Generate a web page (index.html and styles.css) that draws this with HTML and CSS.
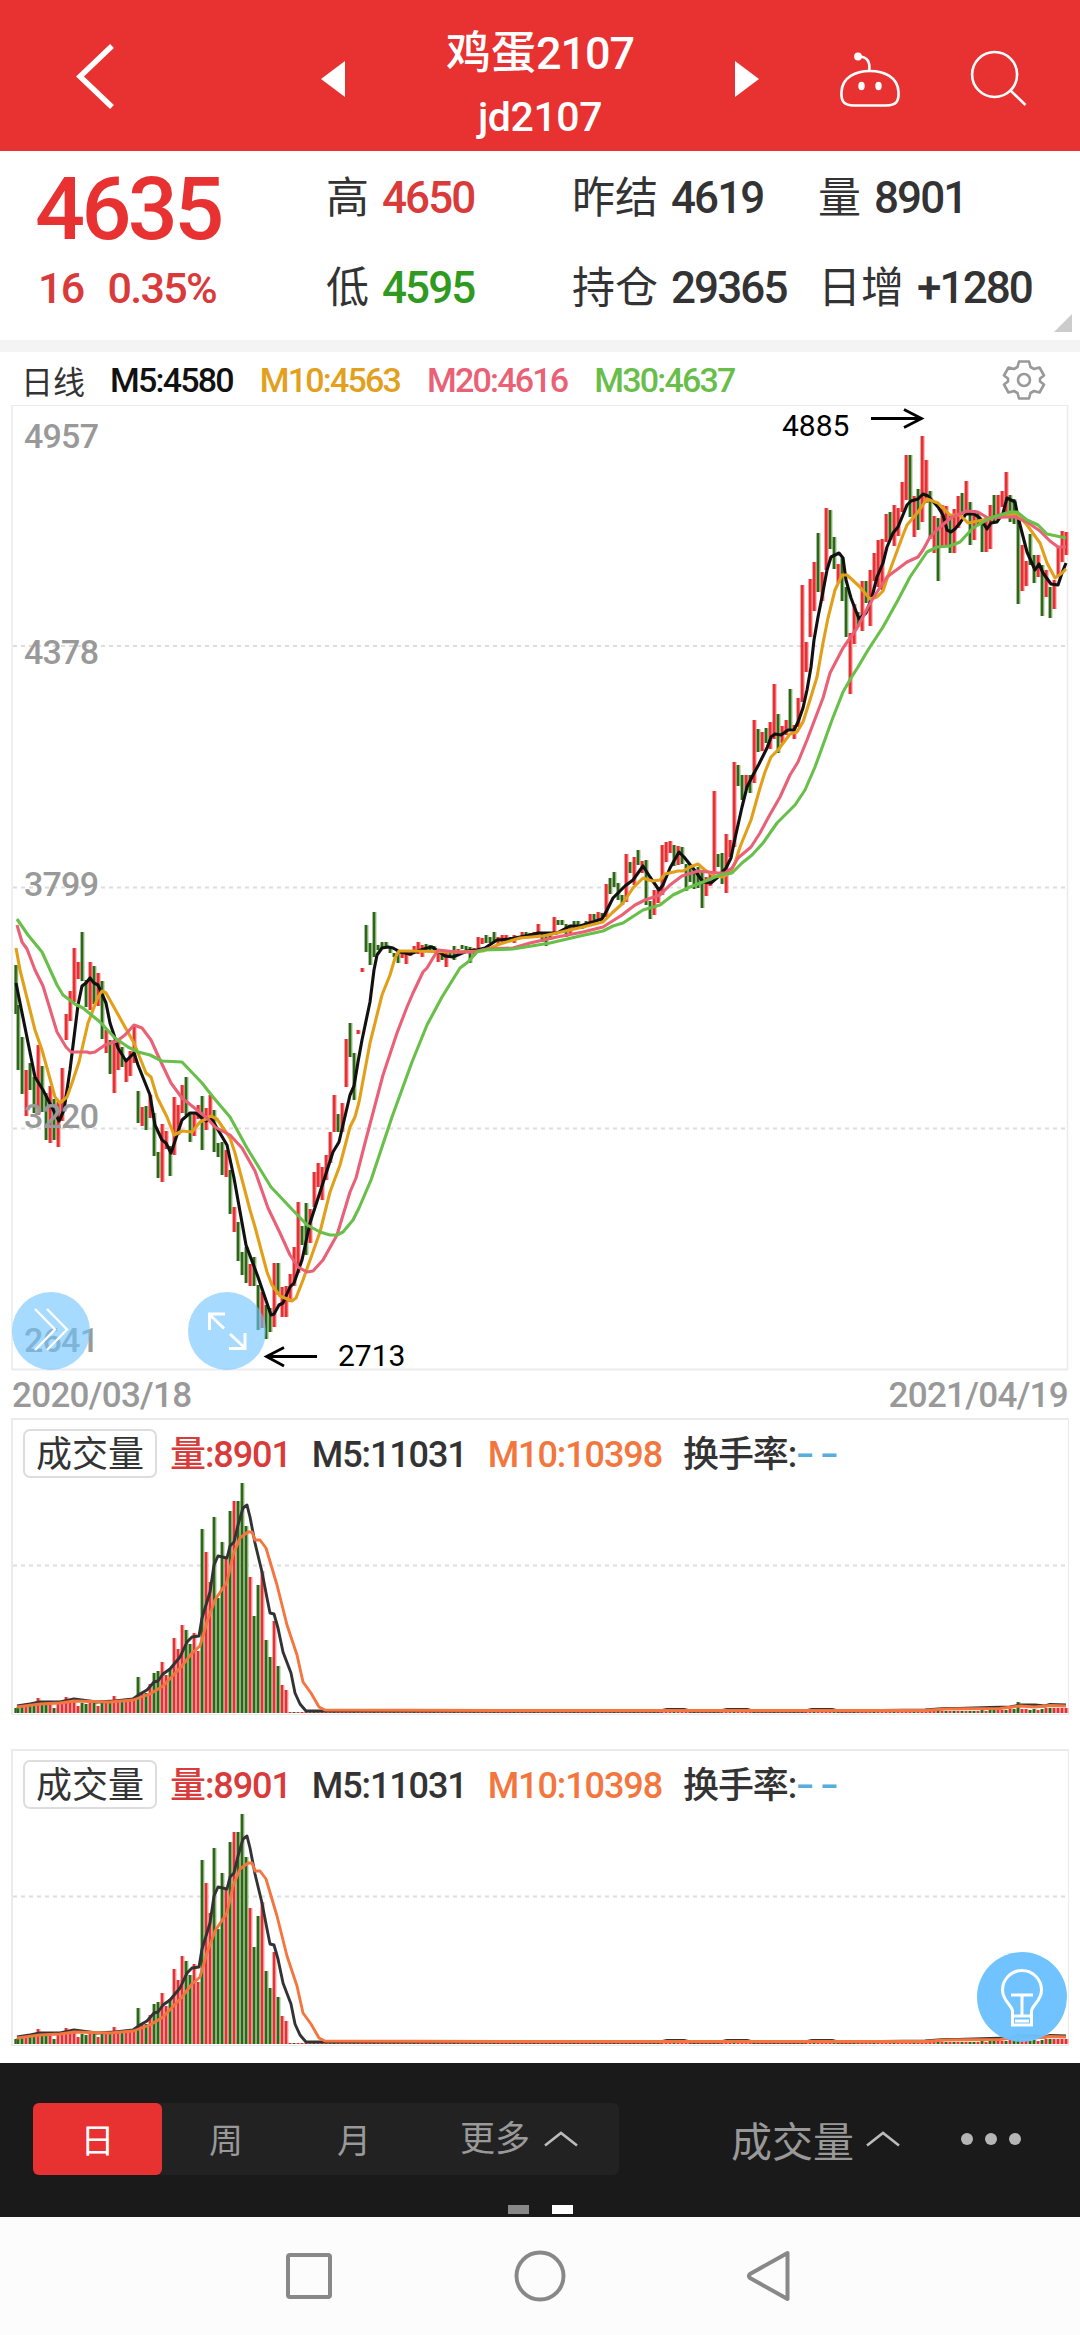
FILE: index.html
```html
<!DOCTYPE html>
<html lang="zh-CN">
<head>
    <meta charset="UTF-8">
    <meta name="viewport" content="width=device-width, initial-scale=1.0">
    <title>鸡蛋2107</title>
    <link rel="stylesheet" href="styles.css">
</head>
<body>
    <header class="header">
        <svg class="back" width="300" height="151" viewBox="0 0 300 151">
            <path d="M112 46 L80 76.500 L112 107" fill="none" stroke="#fff" stroke-width="5.500"/>
        </svg>
        <svg width="60" height="151" viewBox="300 0 60 151"><path d="M321 79 L345 61 V97 Z" fill="#fff"/></svg>
        <div class="title">
            <div class="name">鸡蛋<span class="num">2107</span></div>
            <div class="code">jd2107</div>
        </div>
        <svg width="60" height="151" viewBox="720 0 60 151"><path d="M759 79 L735 61 V97 Z" fill="#fff"/></svg>
        <svg width="150" height="151" viewBox="780 0 150 151" fill="none" stroke="#fff" stroke-width="2.600">
            <path d="M870 71 C884 71 898 77 898.500 92 C899 102 896 105 886 105.500 H854 C844 105 841 102 841.500 92 C842 77 856 71 870 71 Z"/>
            <path d="M858 56.500 C866 56 871 61 869 71"/>
            <circle cx="858" cy="56.500" r="2.600" fill="#fff"/>
            <ellipse cx="861.500" cy="86" rx="3.200" ry="4.200" fill="#fff" stroke="none"/>
            <ellipse cx="878.500" cy="86" rx="3.200" ry="4.200" fill="#fff" stroke="none"/>
        </svg>
        <svg width="150" height="151" viewBox="930 0 150 151" fill="none" stroke="#fff" stroke-width="2.600">
            <circle cx="994.600" cy="74.500" r="22.500"/>
            <path d="M1010 90 L1025.500 105"/>
        </svg>
    </header>

    <section class="quote">
        <div class="price">4635</div>
        <div class="item">高<span class="num red">4650</span></div>
        <div class="item">昨结<span class="num">4619</span></div>
        <div class="item">量<span class="num">8901</span></div>
        <div class="change"><span>16</span><span>0.35%</span></div>
        <div class="item">低<span class="num green">4595</span></div>
        <div class="item">持仓<span class="num">29365</span></div>
        <div class="item">日增<span class="num">+1280</span></div>
        <svg class="corner" width="18" height="18" viewBox="0 0 18 18"><path d="M18 0 V18 H0 Z" fill="#ccc"/></svg>
    </section>

    <div class="ma-bar">
        <span class="period">日线</span>
        <span class="m5">M5:4580</span>
        <span class="m10">M10:4563</span>
        <span class="m20">M20:4616</span>
        <span class="m30">M30:4637</span>
        <svg class="gear" width="44" height="44" viewBox="-22 -22 44 44" fill="none" stroke="#999" stroke-width="2.600" stroke-linejoin="round">
            <path d="M-5 -18.500 H5 L6.500 -13 L10 -11 L15.500 -12.500 L20 -4.500 L16 -1.500 V1.500 L20 4.500 L15.500 12.500 L10 11 L6.500 13 L5 18.500 H-5 L-6.500 13 L-10 11 L-15.500 12.500 L-20 4.500 L-16 1.500 V-1.500 L-20 -4.500 L-15.500 -12.500 L-10 -11 L-6.500 -13 Z"/>
            <circle r="6"/>
        </svg>
    </div>

    <section class="kline">
        <svg id="kline" width="1080" height="966" viewBox="0 405 1080 966"></svg>
        <svg class="float-btn play" width="78" height="78" viewBox="12 1292 78 78" fill="none" stroke="#fff">
            <circle cx="51" cy="1331" r="39" fill="#6fc4ff" fill-opacity="0.62" stroke="none"/>
            <path d="M35 1309 L55 1329.500 L35 1350 M47 1309 L67 1329.500 L47 1350" stroke-width="2.400"/>
        </svg>
        <svg class="float-btn expand" width="78" height="78" viewBox="188 1292 78 78" fill="none" stroke="#fff">
            <circle cx="227" cy="1331" r="39" fill="#6fc4ff" fill-opacity="0.62" stroke="none"/>
            <path d="M209.500 1330 V1314 H225 M210 1315 L224 1328.500 M229 1348.500 H245 V1333 M230 1334 L245 1348" stroke-width="3"/>
        </svg>
    </section>
    <div class="dates"><span>2020/03/18</span><span>2021/04/19</span></div>

    <section class="volume">
        <div class="vol-bar">
            <span class="vol-btn">成交量</span>
            <span class="v-now">量:8901</span>
            <span class="v-m5">M5:11031</span>
            <span class="v-m10">M10:10398</span>
            <span class="v-rate">换手率:<i>--</i></span>
        </div>
        <svg class="vol-chart" width="1062" height="234" viewBox="12 1480 1062 234"></svg>
    </section>

    <section class="volume second">
        <div class="vol-bar">
            <span class="vol-btn">成交量</span>
            <span class="v-now">量:8901</span>
            <span class="v-m5">M5:11031</span>
            <span class="v-m10">M10:10398</span>
            <span class="v-rate">换手率:<i>--</i></span>
        </div>
        <svg class="vol-chart" width="1062" height="234" viewBox="12 1480 1062 234"></svg>
        <svg class="bulb" width="90" height="90" viewBox="-45 -45 90 90" fill="none" stroke="#fff" stroke-width="3">
            <circle r="45" fill="#6bc1ff" fill-opacity="0.960" stroke="none"/>
            <path d="M-9.500 28 V14 C-10 8 -19.500 4 -19.500 -7 A19.500 19.500 0 0 1 19.500 -7 C19.500 4 10 8 9.500 14 V28 Z"/>
            <path d="M-11 -2 H11 M0 -2 V18 M-9 19 H9 M-7 24 H7"/>
        </svg>
    </section>

    <nav class="toolbar">
        <div class="toolbar-row">
            <div class="tabs">
                <span class="tab active">日</span>
                <span class="tab">周</span>
                <span class="tab">月</span>
                <span class="tab more">更多
                    <svg width="34" height="16" viewBox="0 0 34 16"><path d="M1 14.500 L17 2 L33 14.500" fill="none" stroke="#bbb" stroke-width="2.600"/></svg>
                </span>
            </div>
            <span class="indicator">成交量
                <svg width="34" height="16" viewBox="0 0 34 16"><path d="M1 14.500 L17 2 L33 14.500" fill="none" stroke="#bbb" stroke-width="2.600"/></svg>
            </span>
            <div class="dots"><b></b><b></b><b></b></div>
        </div>
        <div class="pages"><b></b><b class="on"></b></div>
    </nav>

    <footer class="sysnav">
        <svg width="1080" height="118" viewBox="0 2217 1080 118" fill="none" stroke="#888" stroke-width="4" stroke-linejoin="round">
            <rect x="288" y="2255" width="42" height="42" rx="2"/>
            <circle cx="540" cy="2276" r="23.500"/>
            <path d="M750 2274 Q748 2276 750 2278 L787.500 2299 V2253 Z"/>
        </svg>
    </footer>

    <script src="chart.js"></script>
</body>
</html>
```

FILE: styles.css
```css
* {
    box-sizing: border-box;
}

body {
    margin: 0;
    width: 1080px;
    background: #fff;
    color: #333;
    font-family: Roboto, "Noto Sans CJK SC", sans-serif;
}

svg {
    display: block;
    flex: none;
}

.header {
    display: flex;
    height: 151px;
    background: #e83131;
    color: #fff;
}

.title {
    width: 360px;
    padding-top: 24px;
    text-align: center;
}

.name {
    height: 62px;
    line-height: 60px;
    font-size: 45px;
    font-weight: 500;
}

.code {
    height: 60px;
    line-height: 62px;
    font-size: 41px;
    font-weight: 500;
    letter-spacing: -0.4px;
}

.name .num {
    letter-spacing: -1.1px;
}

.quote {
    position: relative;
    display: grid;
    grid-template-columns: 291px 246px 246px 1fr;
    grid-template-rows: 90px 89px;
    align-items: center;
    height: 189px;
    padding: 2px 0 0 35px;
}

.price {
    padding-top: 22px;
    font-size: 88px;
    line-height: 90px;
    font-weight: 500;
    letter-spacing: -3.6px;
    color: #e83131;
}

.change {
    display: flex;
    gap: 24px;
    padding-left: 3px;
    font-size: 43px;
    letter-spacing: -1.7px;
    font-weight: 500;
    color: #d93a3a;
}

.item {
    font-size: 43px;
    line-height: 60px;
    white-space: nowrap;
}

.item .num {
    margin-left: 13px;
    font-size: 44px;
    font-weight: 500;
    letter-spacing: -1.9px;
}

.red {
    color: #d93a3a;
}

.green {
    color: #2f9a1f;
}

.corner {
    position: absolute;
    right: 8px;
    bottom: 8px;
}

.ma-bar {
    display: flex;
    align-items: center;
    height: 65px;
    padding: 3px 34px 0 21px;
    border-top: 12px solid #f4f4f4;
    font-size: 34px;
    font-weight: 500;
    letter-spacing: -1.8px;
    white-space: nowrap;
}

.ma-bar span {
    margin-right: 27px;
}

.ma-bar .period {
    margin-right: 25px;
    font-size: 32px;
    font-weight: 400;
    letter-spacing: 0;
}

.m5 { color: #111; }
.m10 { color: #e2a01c; }
.m20 { color: #ea6075; }
.m30 { color: #69be4a; }

.gear {
    margin-left: auto;
}

.kline {
    position: relative;
    height: 966px;
}

.float-btn {
    position: absolute;
    bottom: 1px;
}

.play { left: 12px; }
.expand { left: 188px; }

.axis {
    font-size: 34px;
    font-weight: 500;
    fill: #999;
}

.mark {
    font-size: 30px;
    fill: #000;
}

.dates {
    display: flex;
    justify-content: space-between;
    height: 47px;
    padding: 0 12px;
    line-height: 50px;
    font-size: 35px;
    font-weight: 500;
    letter-spacing: -0.7px;
    color: #999;
}

.volume {
    position: relative;
    height: 297px;
    margin: 0 11px;
    border: solid #ebebeb;
    border-width: 2px 1px 1px 2px;
}

.second {
    margin-top: 34px;
    margin-bottom: 17px;
}

.vol-bar {
    display: flex;
    align-items: baseline;
    height: 60px;
    padding: 9px 0 0 10px;
    font-size: 36px;
    font-weight: 500;
    letter-spacing: -1.1px;
    line-height: 44px;
    white-space: nowrap;
}

.vol-bar span {
    margin-right: 21px;
}

.vol-bar .vol-btn {
    width: 134px;
    height: 49px;
    margin-right: 13px;
    border: 2px solid #ddd;
    border-radius: 7px;
    text-align: center;
    line-height: 49px;
    font-weight: 400;
    letter-spacing: 0;
}

.vol-bar .v-now { color: #d93a3a; }
.v-m10 { color: #f2763e; }

.v-rate i {
    display: inline-block;
    color: #57aede;
    font-style: normal;
    letter-spacing: 4px;
    transform: scaleX(1.5);
    transform-origin: left;
}

.vol-chart {
    margin-left: -1px;
}

.bulb {
    position: absolute;
    right: 1px;
    bottom: 3px;
}

.toolbar {
    height: 154px;
    padding-top: 40px;
    background: #1a1a1a;
    color: #999;
}

.toolbar-row {
    display: flex;
    align-items: center;
    height: 72px;
    padding-left: 33px;
}

.tabs {
    display: flex;
    width: 586px;
    height: 72px;
    border-radius: 6px;
    background: #222;
    font-size: 34px;
    line-height: 77px;
}

.tab {
    width: 128px;
    text-align: center;
}

.tab.active {
    width: 129px;
    border-radius: 6px;
    background: #e83131;
    color: #fff;
}

.more {
    display: flex;
    align-items: center;
    width: 200px;
    padding-left: 42px;
    gap: 14px;
    font-size: 35px;
}

.indicator {
    display: flex;
    align-items: center;
    width: 235px;
    margin-left: 112px;
    font-size: 41px;
    gap: 12px;
}

.dots {
    display: flex;
    gap: 12px;
    margin-left: -5px;
}

.dots b {
    width: 12px;
    height: 12px;
    border-radius: 50%;
    background: #b5b5b5;
}

.pages {
    display: flex;
    justify-content: center;
    gap: 23px;
    padding-top: 30px;
}

.pages b {
    width: 21px;
    height: 9px;
    background: #888;
}

.pages .on {
    background: #fff;
}

.sysnav {
    height: 118px;
    background: #fcfcfc;
}
```

FILE: chart.js
```js
// one entry per trading day: colour, top, bottom
const candles = `G965,1014 G1005,1070 G1037,1094 R1070,1116 G1063,1090 G1077,1113 R1045,1115 G1066,1112 G1093,1140 R1086,1143
G1099,1140 R1102,1147 R1068,1121 R1014,1040 R991,1021 R948,1002 R962,979 G932,981 G980,1007 R962,1010
G966,1004 R973,1006 G981,1039 R1030,1053 G1040,1074 R1040,1093 R1040,1070 G1047,1067 R1060,1082 R1051,1076
R1025,1063 G1091,1123 R1107,1126 G1106,1130 R1095,1118 G1113,1156 G1152,1178 R1124,1182 R1131,1149 G1146,1176
R1097,1155 R1105,1135 R1085,1113 G1077,1115 G1113,1142 R1113,1136 R1105,1119 G1096,1150 R1108,1130 R1095,1117
G1110,1152 G1143,1157 G1142,1175 R1150,1177 G1170,1214 R1207,1232 G1222,1261 G1252,1275 G1247,1283 R1264,1286
G1257,1286 G1285,1330 R1292,1328 G1305,1339 G1308,1332 R1263,1327 G1263,1295 R1287,1317 R1286,1317 R1274,1302
R1247,1286 R1202,1273 G1226,1245 G1203,1255 R1209,1243 R1172,1207 R1163,1187 R1167,1200 R1155,1180 R1132,1163
R1095,1132 G1114,1132 R1103,1132 R1039,1087 G1023,1057 G1053,1100 R1030,1034 R968,972 G925,952 G943,965
G912,957 G945,950 G942,948 G942,948 G947,953 G953,957 G951,963 R950,958 R952,964 R951,956
R946,953 R942,954 R945,957 G944,952 G945,951 G946,952 R950,962 G950,960 R952,967 G950,956
G946,960 R949,955 G945,949 G946,951 G947,963 R948,955 R937,950 R938,944 G935,943 G937,943
G932,942 R937,944 R935,942 R935,942 G937,942 R935,943 R936,940 R932,938 G932,938 G933,938
R932,937 R924,935 G933,942 G934,946 G933,940 R917,935 G920,925 G920,925 G924,937 R925,933
G921,930 G921,929 G924,929 G921,926 R914,922 G914,920 R912,921 G913,918 R884,917 G878,894
G872,887 G883,900 G895,905 R854,902 G862,873 R857,885 G850,865 R861,873 G860,905 G901,919
R890,915 R887,903 R845,895 R842,862 R841,853 G845,866 R846,865 G847,864 G864,891 G865,882
G870,889 G867,888 G870,908 R877,896 R873,886 R791,873 G854,867 G853,884 R834,893 R840,857
R762,847 G765,786 G775,800 R775,790 G775,793 R720,783 G729,752 R732,751 G728,743 R722,749
R684,739 G714,753 R726,743 R720,735 G689,730 R725,739 R698,727 R585,702 R642,672 R579,637
R562,611 G533,592 R572,601 R508,570 G510,549 G537,569 R564,583 G558,601 G587,637 R633,694
R604,644 G612,627 R581,631 G581,603 R570,626 R553,581 R540,587 R539,590 R514,542 G512,540
R505,546 R508,536 R482,512 R455,500 G455,517 R496,537 G489,530 R436,522 R460,503 G491,539
R516,553 G518,581 R505,547 R506,545 G515,553 R509,553 R496,528 G493,515 R481,513 G502,545
R510,540 G513,525 G520,552 R517,552 R505,549 G495,522 R495,520 R491,507 R472,515 G495,522
G499,524 G516,604 R545,591 R561,586 G534,565 G555,583 R555,577 G565,616 R570,597 G587,618
R580,609 R547,577 R531,562 R532,555`.split(/\s+/);

// drawn in this order, longest average last so it stays on top
const ma = {
    '#111': `16,983 35,1077 43,1090 59,1121 64,1110 70,1070 78,1005 82,986 86,983 90,978 94,983 98,985 106,1003 110,1023 114,1035 118,1048 126,1061 134,1053 138,1065 150,1095 155,1125 162,1140 166,1143 171,1153 182,1120 190,1113 196,1113 202,1118 206,1121 211,1118 227,1145 234,1178 246,1245 258,1277 271,1315 274,1314 279,1305 283,1303 290,1287 294,1283 302,1260 310,1223 333,1152 339,1142 350,1095 354,1086 358,1062 362,1040 370,1002 374,970 377,955 382,948 388,947 393,948 400,952 410,954 418,951 427,948 432,947 438,951 445,956 453,957 460,954 467,951 477,950 485,948 497,940 510,939 530,935 538,933 557,933 570,926 580,926 602,919 607,910 613,898 625,886 633,880 643,866 650,877 659,890 663,885 670,868 679,852 684,857 688,862 696,872 703,882 711,883 718,877 726,868 731,858 734,843 742,807 747,787 753,775 759,764 767,748 771,737 775,734 781,735 788,730 794,730 798,722 803,708 807,690 811,667 814,640 818,617 822,597 827,570 831,557 839,553 843,558 846,580 851,598 859,619 866,613 872,597 877,577 883,563 887,547 893,533 898,527 907,505 911,501 918,499 923,494 928,496 938,507 943,515 947,530 951,532 955,529 960,523 966,514 974,514 980,518 987,529 991,523 997,522 1003,513 1007,498 1015,502 1018,517 1027,552 1035,570 1039,564 1043,573 1051,584 1058,585 1062,573 1066,563`,
    '#e2a01a': `16,948 20,970 35,1030 42,1050 55,1097 60,1103 67,1097 72,1083 79,1062 88,1023 98,997 102,991 106,993 125,1027 134,1043 140,1058 146,1073 151,1077 157,1097 167,1117 174,1135 182,1131 192,1132 200,1122 206,1119 211,1116 217,1119 230,1138 235,1153 250,1210 255,1227 267,1272 272,1285 280,1296 292,1301 296,1298 303,1280 320,1232 330,1192 340,1165 350,1127 355,1117 359,1102 370,1043 382,995 390,975 395,958 399,951 410,951 457,952 483,951 500,944 520,938 543,936 557,933 583,927 603,922 612,913 623,903 633,888 643,878 652,881 660,880 665,874 678,871 683,871 690,867 698,864 705,870 715,876 723,877 730,873 735,863 740,847 751,820 760,788 765,772 771,757 778,750 790,734 797,732 803,722 810,700 817,677 823,643 828,618 835,590 842,575 847,575 859,586 870,599 877,597 883,591 890,570 903,535 907,525 918,512 927,499 938,503 950,515 960,515 968,523 983,520 993,518 1007,515 1017,514 1027,525 1040,543 1047,563 1055,578 1062,573 1066,569`,
    '#ea6077': `17,925 22,942 27,949 35,970 43,986 57,1032 66,1047 71,1052 87,1052 90,1053 95,1052 105,1045 117,1041 125,1035 134,1025 142,1028 151,1040 160,1060 171,1083 182,1098 197,1110 207,1118 215,1127 230,1135 242,1148 255,1171 268,1208 280,1233 290,1255 298,1267 307,1272 313,1271 323,1260 337,1235 350,1192 356,1178 365,1143 383,1075 397,1033 407,1007 413,993 423,972 427,968 433,958 438,950 457,952 473,952 487,949 513,948 530,943 557,937 583,932 603,927 622,915 635,905 645,900 660,895 670,885 682,876 698,871 718,873 725,873 732,868 738,858 751,847 760,833 768,818 780,797 790,775 798,762 807,740 823,698 830,673 843,648 857,628 868,607 877,592 887,577 907,562 918,557 923,550 930,537 940,527 952,517 967,511 978,512 988,518 1007,517 1015,517 1027,522 1040,531 1050,541 1058,547 1066,547`,
    '#68bf49': `17,919 28,935 42,952 57,985 63,995 75,1004 83,1008 100,1022 115,1038 128,1047 138,1052 150,1055 162,1061 182,1062 202,1083 213,1097 230,1117 247,1148 271,1187 287,1204 307,1225 320,1232 330,1235 337,1235 343,1232 353,1220 359,1208 371,1180 380,1153 392,1117 412,1062 427,1025 442,997 460,968 468,962 477,952 483,950 513,949 550,943 580,936 603,931 613,926 623,923 643,910 660,905 673,895 690,887 703,882 720,875 732,873 742,863 752,855 763,843 777,823 795,805 805,790 815,767 823,745 832,720 843,692 851,678 858,667 868,650 883,627 898,600 910,577 927,552 937,547 950,546 960,542 973,528 990,518 1010,512 1017,512 1027,520 1038,525 1047,534 1066,538`
};

const volumes = `G5 G6 G6 R6 G7 G7 R15 G9 G9 R8 G5 R9 R10 R16 R11 R11 R7 G10 G9 R10 G10 R7 G10 R10 G10 R17 R11 G11 R12 R12
R14 G36 R20 G20 R29 G40 G42 R51 R38 G45 R75 R64 R88 G83 G69 R80 R62 G184 R161 R131 G196 G115 G171 R154 G202 R212 G212
G230 G187 R136 G97 G128 R142 G73 G56 R92 G47 R28 R23`.split(/\s+/);
while (volumes.length < 229) volumes.push((volumes.length % 5 ? 'R' : 'G') + 1);
volumes.push(...`R2 R2 G2 R2 G2 R2 G2 R2 G2 R2 G2 G2 R2 G3 R2 G3 G3 R3 R3 G3 R4 G4 G11 R4 R4 G3 G4 R3 G4 R5 G5 R5 R5 R5 R5`.split(' '));

const volMa = {
    '#333': `17,1706 30,1704 40,1702 60,1702 74,1699 97,1702 115,1701 133,1699 140,1694 147,1690 154,1682 158,1681 163,1674 170,1669 180,1657 187,1642 192,1637 199,1636 202,1618 210,1592 214,1565 218,1556 227,1558 230,1546 234,1542 238,1525 243,1508 247,1505 250,1517 255,1543 262,1572 267,1598 270,1613 274,1614 278,1628 283,1652 291,1673 295,1693 300,1704 306,1711 320,1711 660,1711 667,1709.5 684,1709.5 690,1711 720,1711 727,1709.5 747,1709.5 753,1711 805,1711 812,1709.5 832,1709.5 838,1711 925,1710 945,1708.5 958,1708.5 990,1707.5 1010,1707 1020,1705 1035,1705 1045,1706 1050,1704.5 1066,1705`,
    '#f4763e': `17,1707 40,1704 60,1703 74,1701 110,1702 133,1700 150,1694 163,1686 182,1666 192,1653 200,1646 207,1622 215,1600 227,1582 233,1555 240,1538 248,1532 252,1532 255,1540 260,1540 266,1548 277,1585 287,1625 297,1655 303,1682 311,1693 319,1707 325,1710 500,1710.5 925,1710.5 945,1709 1000,1708.5 1020,1706 1035,1707 1050,1705.5 1066,1706`
};

const colors = {
    R: ['#dd3437', '#ff6164'],
    G: ['#2f651a', '#86b070']
};

function bar(i, c, top, bottom, pale) {
    const x = i === 0 ? 14.5 : 12.7 + 4 * i;
    const h = bottom - top;
    const light = pale && c === 'R' ? '#ff8a8c' : colors[c][1];
    return `<rect x="${x}" y="${top}" width="3.7" height="${h}" fill="${light}"/>` +
        `<rect x="${x}" y="${top}" width="2.3" height="${h}" fill="${colors[c][0]}"/>`;
}

function lines(set, width) {
    return Object.keys(set).map(c =>
        `<polyline points="${set[c]}" fill="none" stroke="${c}" stroke-width="${width}" stroke-linejoin="round"/>`).join('');
}

function grid(y) {
    return `<path d="M13 ${y} H1066" stroke="#ddd" stroke-width="1.8" stroke-dasharray="4 4"/>`;
}

let k = '<path d="M12 405 H1068 M12 1369.5 H1068" stroke="#ebebeb" stroke-width="2"/>' +
    '<path d="M12 405 V1370 M1067.5 405 V1370" stroke="#ebebeb" stroke-width="1.6"/>';
k += [646, 887.5, 1128.5].map(grid).join('');
candles.forEach((s, i) => {
    const [top, bottom] = s.slice(1).split(',').map(Number);
    k += bar(i, s[0], top, bottom);
});
k += lines(ma, 3.1);
[[4957, 448], [4378, 664], [3799, 896], [3220, 1128], [2641, 1352]].forEach(([t, y]) => {
    k += `<text class="axis" x="24" y="${y}" textLength="75">${t}</text>`;
});
k += '<text class="mark" x="782" y="436">4885</text><text class="mark" x="338" y="1366">2713</text>';
k += '<path d="M871 418.500 H921 M904 409.500 L921.500 418.500 L904 427.500 M317 1356.500 H267 M284 1347.500 L266.500 1356.500 L284 1366" fill="none" stroke="#000" stroke-width="2.800"/>';
document.getElementById('kline').innerHTML = k;

let v = grid(1565.5);
volumes.forEach((s, i) => {
    v += bar(i, s[0], 1713 - Number(s.slice(1)), 1713, true);
});
v += lines(volMa, 2.9);
document.querySelectorAll('.vol-chart').forEach(el => {
    el.innerHTML = v;
});
```
